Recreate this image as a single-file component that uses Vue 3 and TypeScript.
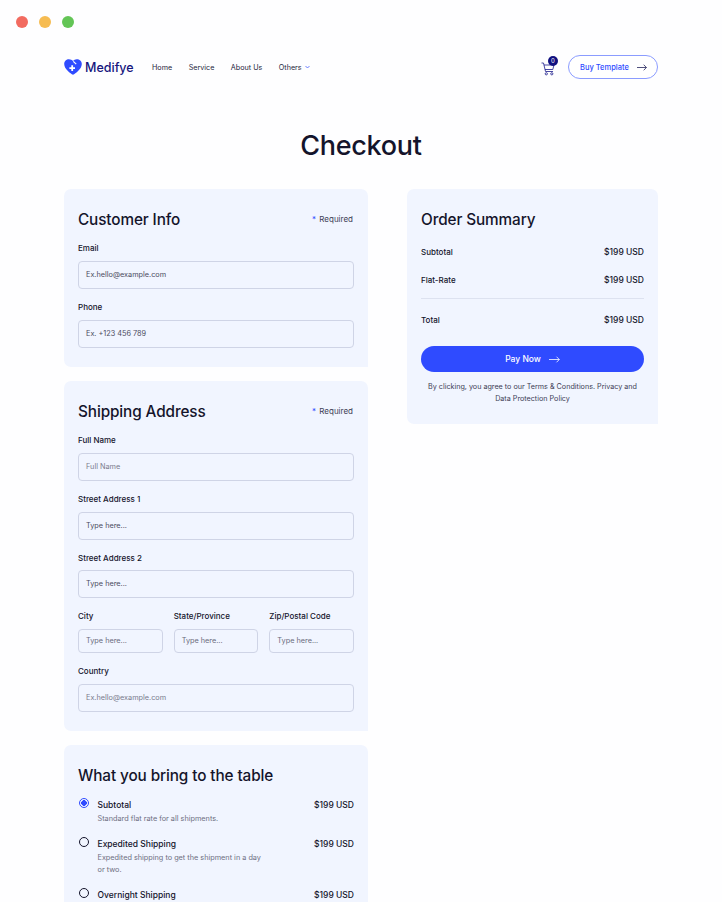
<template>
  <div class="page">
    <div class="window-dots">
      <span class="dot red"></span>
      <span class="dot yellow"></span>
      <span class="dot green"></span>
    </div>

    <header class="nav">
      <div class="brand">
        <svg width="18" height="16" viewBox="0 0 18 16">
          <path d="M9 15.800C6.600 14.300 .2 10 .2 4.900.2 2.100 2.400 .2 4.900 .2 6.500 .2 8 .9 9 2.100L10.600 .8 12.700 .2C15.500 .2 17.800 2.200 17.800 4.900 17.800 10 11.400 14.300 9 15.800Z" fill="#2f4bff" />
          <path d="M9.300 2.300 12.200 5.200" stroke="#fff" stroke-width="1.200" fill="none" />
          <path d="M7.300 6.300V8.200H5.400V10H7.300V11.900H9.100V10H11V8.200H9.100V6.300Z" fill="#fff" />
        </svg>
        <span class="brand-name">Medifye</span>
      </div>
      <nav class="links">
        <a v-for="link in links" :key="link">{{ link }}</a>
        <a class="others">
          Others
          <svg width="5" height="4" viewBox="0 0 5 4"><path d="M.5 1 2.500 3 4.500 1" fill="none" stroke="#2f4bff" stroke-width=".7" /></svg>
        </a>
      </nav>
      <div class="nav-right">
        <div class="cart">
          <svg width="14" height="14" viewBox="0 0 14 14" fill="none" stroke="#1a1a8c" stroke-width=".8">
            <path d="M.5 1H2.500L4.500 9.500H12" />
            <path d="M3 3H13L11.800 7.500H4" />
            <circle cx="5.300" cy="11.800" r="1.100" />
            <circle cx="10.800" cy="11.800" r="1.100" />
          </svg>
          <span class="badge">0</span>
        </div>
        <button class="outline-btn">
          Buy Template
          <svg width="10" height="7" viewBox="0 0 10 7" fill="none" stroke="#25255c" stroke-width=".8"><path d="M0 3.500H9.400M6.700 .7 9.400 3.500 6.700 6.300" /></svg>
        </button>
      </div>
    </header>

    <h1 class="page-title">Checkout</h1>

    <div class="columns">
      <div class="left">
        <section class="card">
          <div class="card-head">
            <h2>Customer Info</h2>
            <span class="required"><i>*</i> Required</span>
          </div>
          <div class="field">
            <label>Email</label>
            <div class="input">Ex.hello@example.com</div>
          </div>
          <div class="field">
            <label>Phone</label>
            <div class="input dark">Ex. +123 456 789</div>
          </div>
        </section>

        <section class="card">
          <div class="card-head">
            <h2>Shipping Address</h2>
            <span class="required"><i>*</i> Required</span>
          </div>
          <div class="field">
            <label>Full Name</label>
            <div class="input light">Full Name</div>
          </div>
          <div class="field">
            <label>Street Address 1</label>
            <div class="input">Type here...</div>
          </div>
          <div class="field tight">
            <label>Street Address 2</label>
            <div class="input">Type here...</div>
          </div>
          <div class="triple">
            <div v-for="name in triple" :key="name" class="field">
              <label>{{ name }}</label>
              <div class="input small">Type here...</div>
            </div>
          </div>
          <div class="field">
            <label>Country</label>
            <div class="input light">Ex.hello@example.com</div>
          </div>
        </section>

        <section class="card last">
          <h2>What you bring to the table</h2>
          <div v-for="opt in options" :key="opt.name" class="option">
            <span class="radio" :class="{ on: opt.on }"></span>
            <div class="option-body">
              <div class="option-row">
                <span class="option-name">{{ opt.name }}</span>
                <span class="price">$199 USD</span>
              </div>
              <p v-if="opt.desc" class="option-desc">{{ opt.desc }}</p>
            </div>
          </div>
        </section>
      </div>

      <aside class="card summary">
        <h2>Order Summary</h2>
        <div class="sum-row"><span>Subtotal</span><span class="price">$199 USD</span></div>
        <div class="sum-row"><span>Flat-Rate</span><span class="price">$199 USD</span></div>
        <div class="sum-row total"><span>Total</span><span class="price">$199 USD</span></div>
        <button class="pay">
          Pay Now
          <svg width="11" height="7" viewBox="0 0 11 7" fill="none" stroke="#fff" stroke-width=".8"><path d="M0 3.500H10.300M7.500 .7 10.300 3.500 7.500 6.300" /></svg>
        </button>
        <p class="terms">By clicking, you agree to our Terms &amp; Conditions. Privacy and Data Protection Policy</p>
      </aside>
    </div>
  </div>
</template>

<script setup lang="ts">
const links: string[] = ['Home', 'Service', 'About Us'];
const triple: string[] = ['City', 'State/Province', 'Zip/Postal Code'];

const options = [
  { name: 'Subtotal', desc: 'Standard flat rate for all shipments.', on: true },
  { name: 'Expedited Shipping', desc: 'Expedited shipping to get the shipment in a day or two.', on: false },
  { name: 'Overnight Shipping', desc: '', on: false },
];
</script>

<style>
html,
body {
  margin: 0;
  height: 902px;
  overflow: hidden;
  background: #fff;
}
</style>

<style scoped>
.page {
  height: 902px;
  overflow: hidden;
  box-sizing: border-box;
  padding: 16px 64px 0;
  font-family: Inter, "Liberation Sans", sans-serif;
  color: #14142b;
  background: #fefeff;
}

.window-dots {
  display: flex;
  gap: 11px;
  margin-left: -48px;
  height: 12px;
}

.dot {
  width: 12px;
  height: 12px;
  border-radius: 50%;
}

.red { background: #f26b60; }
.yellow { background: #f6bc52; }
.green { background: #63c556; }

.nav {
  display: flex;
  align-items: center;
  height: 24px;
  margin-top: 27px;
}

.brand {
  display: flex;
  align-items: center;
  gap: 3px;
  width: 88px;
}

.brand-name {
  font-size: 12.500px;
  font-weight: 500;
  color: #15157d;
}

.links {
  display: flex;
  gap: 16.500px;
  font-size: 7.200px;
  color: #25253c;
}

.others {
  display: flex;
  align-items: center;
  gap: 3px;
}

.nav-right {
  margin-left: auto;
  display: flex;
  align-items: center;
  gap: 13px;
}

.cart {
  position: relative;
  width: 14px;
  height: 14px;
  margin-top: 3px;
}

.cart svg {
  display: block;
}

.badge {
  position: absolute;
  top: -6px;
  left: 7px;
  width: 10px;
  height: 10px;
  border-radius: 50%;
  background: #101080;
  color: #fff;
  font-size: 6px;
  line-height: 10px;
  text-align: center;
}

.outline-btn {
  display: flex;
  align-items: center;
  gap: 8px;
  height: 24px;
  width: 90px;
  box-sizing: border-box;
  padding: 0 0 0 11px;
  border: 1px solid #8b9cff;
  border-radius: 12px;
  background: #fff;
  color: #2f4bff;
  font: 500 7.500px Inter, "Liberation Sans", sans-serif;
  white-space: nowrap;
}

.page-title {
  margin: 50px 0 0;
  height: 33px;
  font-size: 27px;
  line-height: 33px;
  font-weight: 500;
  text-align: center;
  letter-spacing: -0.3px;
}

.columns {
  display: flex;
  align-items: flex-start;
  justify-content: space-between;
  margin-top: 27px;
}

.left {
  width: 304px;
  display: flex;
  flex-direction: column;
  gap: 14px;
}

.card {
  box-sizing: border-box;
  background: #f1f5ff;
  border-radius: 7px 7px 0 7px;
  padding: 14px 14px 19px;
}

.card-head {
  display: flex;
  justify-content: space-between;
  align-items: center;
  margin-bottom: -5px;
}

h2 {
  margin: 0;
  font-size: 15.300px;
  line-height: 34px;
  height: 32px;
  font-weight: 500;
  letter-spacing: -0.1px;
}

.required {
  font-size: 8px;
  color: #3d3d55;
  margin-right: 1px;
}

.required i {
  color: #2f4bff;
  font-style: normal;
  margin-right: 1px;
}

.field {
  margin-top: 12px;
}

.field label {
  display: block;
  font-size: 8px;
  font-weight: 500;
  line-height: 12px;
  margin-bottom: 7px;
}

.field.tight label {
  margin-bottom: 6px;
}

.input {
  box-sizing: border-box;
  height: 28px;
  padding: 0 7px;
  border: 1px solid #cfd4e6;
  border-radius: 4px;
  font-size: 7.300px;
  line-height: 26px;
  color: #4b4b60;
}

.input.light {
  color: #7a7b8d;
}

.input.small {
  height: 24px;
  line-height: 22px;
  color: #6a6b7d;
}

.triple {
  display: grid;
  grid-template-columns: repeat(3, 1fr);
  gap: 11px;
}

.last {
  height: 200px;
}

.option {
  display: flex;
  gap: 8.500px;
  margin-bottom: 13px;
}

h2 + .option {
  margin-top: 8px;
}

.radio {
  flex: none;
  width: 10px;
  height: 10px;
  margin-left: 1px;
  margin-top: -1px;
  box-sizing: border-box;
  border: 1.200px solid #14142b;
  border-radius: 50%;
}

.radio.on {
  border-color: #2f4bff;
  background: radial-gradient(circle, #2f4bff 0 2.600px, transparent 3px);
}

.option-body {
  flex: 1;
}

.option-row {
  display: flex;
  justify-content: space-between;
  font-size: 8.500px;
  line-height: 12px;
  font-weight: 500;
}

.option-desc {
  margin: 2px 0 0;
  width: 170px;
  font-size: 7.300px;
  line-height: 12px;
  color: #6e6f82;
}

.price {
  font-size: 8.500px;
  font-weight: 500;
}

.summary {
  width: 251px;
  padding-bottom: 19px;
}

.sum-row {
  display: flex;
  justify-content: space-between;
  align-items: center;
  height: 28px;
  font-size: 8px;
  font-weight: 500;
}

.sum-row:first-of-type {
  margin-top: 3px;
}

.total {
  margin-top: 4px;
  height: 42px;
  border-top: 1px solid #dde2f0;
}

.pay {
  display: flex;
  align-items: center;
  justify-content: center;
  gap: 8px;
  width: 100%;
  height: 26px;
  margin-top: 5px;
  border: 0;
  border-radius: 13px;
  background: #2f4bff;
  color: #fff;
  font: 500 8.500px Inter, "Liberation Sans", sans-serif;
}

.terms {
  margin: 9px 0 0;
  padding: 0 5px;
  font-size: 7.200px;
  line-height: 12px;
  text-align: center;
  color: #3d3d55;
}
</style>
